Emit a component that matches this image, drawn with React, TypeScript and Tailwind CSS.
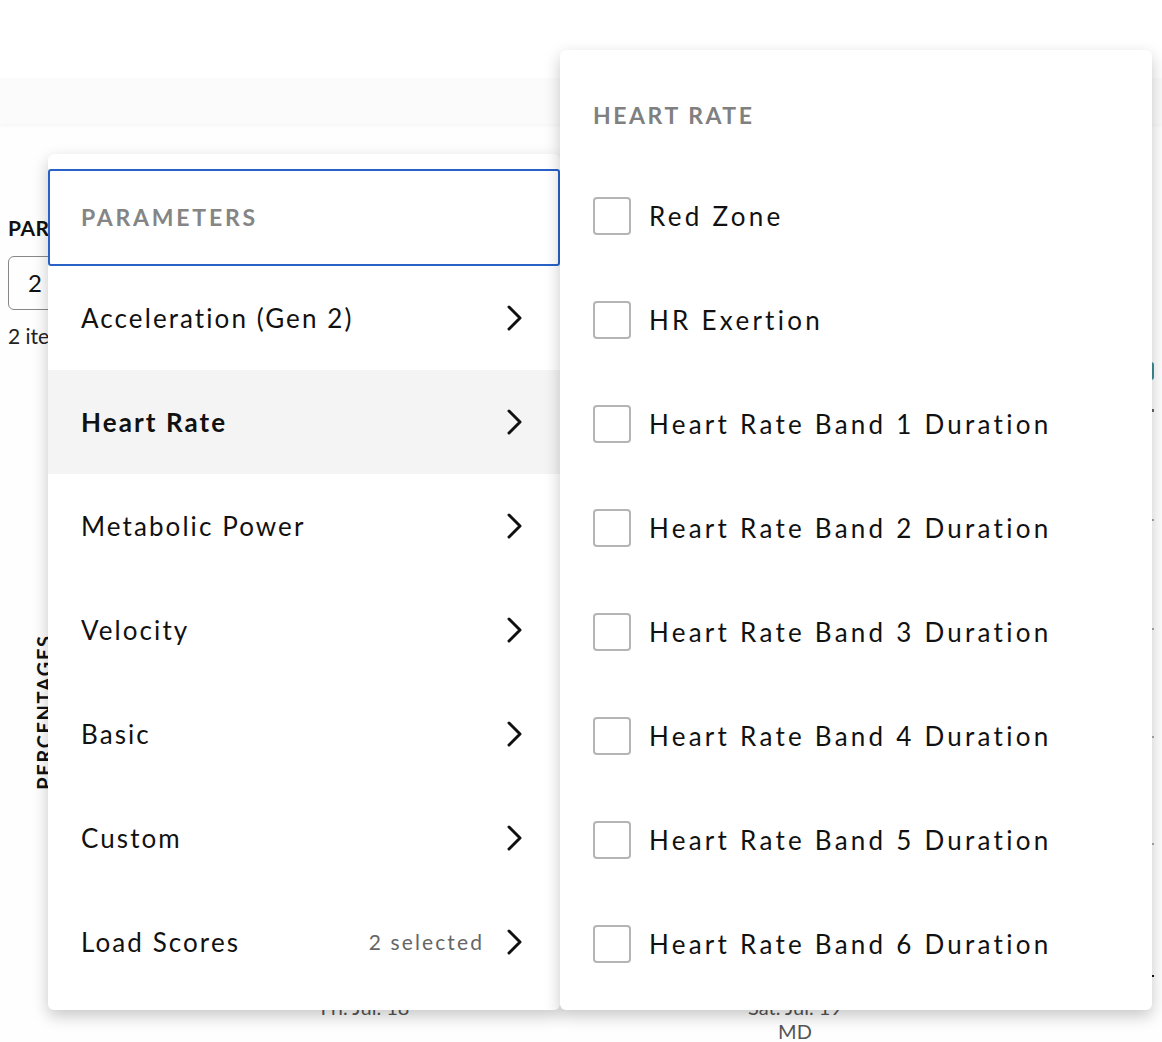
import React from "react";

const ChevronRight = () => (
  <svg width="18" height="28" viewBox="0 0 18 28" fill="none" className="shrink-0">
    <path d="M3 3 L14 14 L3 25" stroke="#111" strokeWidth="3" strokeLinecap="round" strokeLinejoin="round" />
  </svg>
);

export default function App() {
  const groups = [
    { label: "Acceleration (Gen 2)" },
    { label: "Heart Rate", active: true },
    { label: "Metabolic Power" },
    { label: "Velocity" },
    { label: "Basic" },
    { label: "Custom" },
    { label: "Load Scores", note: "2 selected" },
  ];

  const options = [
    "Red Zone",
    "HR Exertion",
    "Heart Rate Band 1 Duration",
    "Heart Rate Band 2 Duration",
    "Heart Rate Band 3 Duration",
    "Heart Rate Band 4 Duration",
    "Heart Rate Band 5 Duration",
    "Heart Rate Band 6 Duration",
  ];

  return (
    <div className="relative h-[1042px] w-full overflow-hidden bg-[#fefefe] font-['Lato',sans-serif] text-[#111]">
      {/* ---------- Page behind the menu ---------- */}
      <div className="h-[78px] bg-white shadow-[0_2px_4px_rgba(0,0,0,0.18)]" />
      <div className="h-[46px] bg-[#fbfbfb] shadow-[0_2px_3px_rgba(0,0,0,0.03)]" />

      <div className="flex flex-col px-[8px]">
        {/* Parameters field */}
        <div className="mt-[90px] text-[21px] font-bold leading-[28px] tracking-wide">PARAMETERS</div>
        <div className="mt-[14px] flex h-[54px] w-[300px] items-center rounded-[6px] border border-[#888] px-[19px] text-[24px]">
          2
        </div>
        <div className="mt-[14px] text-[21px] leading-[24px] text-[#222]">2 items selected</div>

        {/* Chart */}
        <div className="mt-[14px] flex justify-end">
          <div className="h-[18px] w-[60px] rounded-[3px] bg-[#3d8d98]" />
        </div>
        <div className="flex">
          <div className="flex w-[72px] items-center justify-center">
            <span className="-rotate-90 whitespace-nowrap text-[20px] font-bold tracking-[0.08em]">PERCENTAGES</span>
          </div>
          <div className="flex flex-1 flex-col pt-[29px]">
            <div className="h-[3px] bg-[#666]" />
            <div className="h-[109px] border-b-2 border-[#aaa]" />
            <div className="h-[109px] border-b-2 border-[#aaa]" />
            <div className="h-[108px] border-b-2 border-[#aaa]" />
            <div className="h-[107px] border-b-2 border-[#aaa]" />
            <div className="h-[132px] border-b-2 border-[#111]" />
            <div className="flex pt-[18px] text-[20px] leading-[24px] text-[#555]">
              <div className="ml-[225px] w-[120px] text-center">Fri. Jul. 18</div>
              <div className="ml-[310px] flex w-[120px] flex-col items-center">
                <span>Sat. Jul. 19</span>
                <span>MD</span>
              </div>
            </div>
          </div>
        </div>
      </div>

      {/* ---------- Parameters menu ---------- */}
      <div className="absolute left-[48px] top-[154px] w-[512px] rounded-[6px] bg-white pb-[16px] pt-[15px] shadow-[0_6px_16px_rgba(0,0,0,0.22)]">
        <div className="flex h-[97px] items-center rounded-[3px] border-2 border-[#2862c7] px-[31px] text-[23px] font-bold tracking-[0.12em] text-[#858585]">
          PARAMETERS
        </div>
        {groups.map((g) => (
          <div
            key={g.label}
            className={`flex h-[104px] items-center justify-between pl-[33px] pr-[36px] text-[26px] tracking-[0.08em] ${
              g.active ? "bg-[#f4f4f4] font-bold" : ""
            }`}
          >
            <span>{g.label}</span>
            <div className="flex items-center gap-[22px]">
              {g.note && <span className="text-[21px] tracking-[0.1em] text-[#666]">{g.note}</span>}
              <ChevronRight />
            </div>
          </div>
        ))}
      </div>

      {/* ---------- Heart Rate submenu ---------- */}
      <div className="absolute left-[560px] top-[50px] w-[592px] rounded-[6px] bg-white pb-[14px] shadow-[0_6px_16px_rgba(0,0,0,0.22)]">
        <div className="h-[114px] px-[33px] pt-[52px] text-[23px] font-bold leading-[26px] tracking-[0.11em] text-[#808080]">
          HEART RATE
        </div>
        {options.map((o) => (
          <div key={o} className="flex h-[104px] items-center gap-[18px] px-[33px]">
            <div className="h-[38px] w-[38px] shrink-0 rounded-[4px] border-2 border-[#b5b5b5]" />
            <span className="text-[26px] tracking-[0.125em]">{o}</span>
          </div>
        ))}
      </div>
    </div>
  );
}
